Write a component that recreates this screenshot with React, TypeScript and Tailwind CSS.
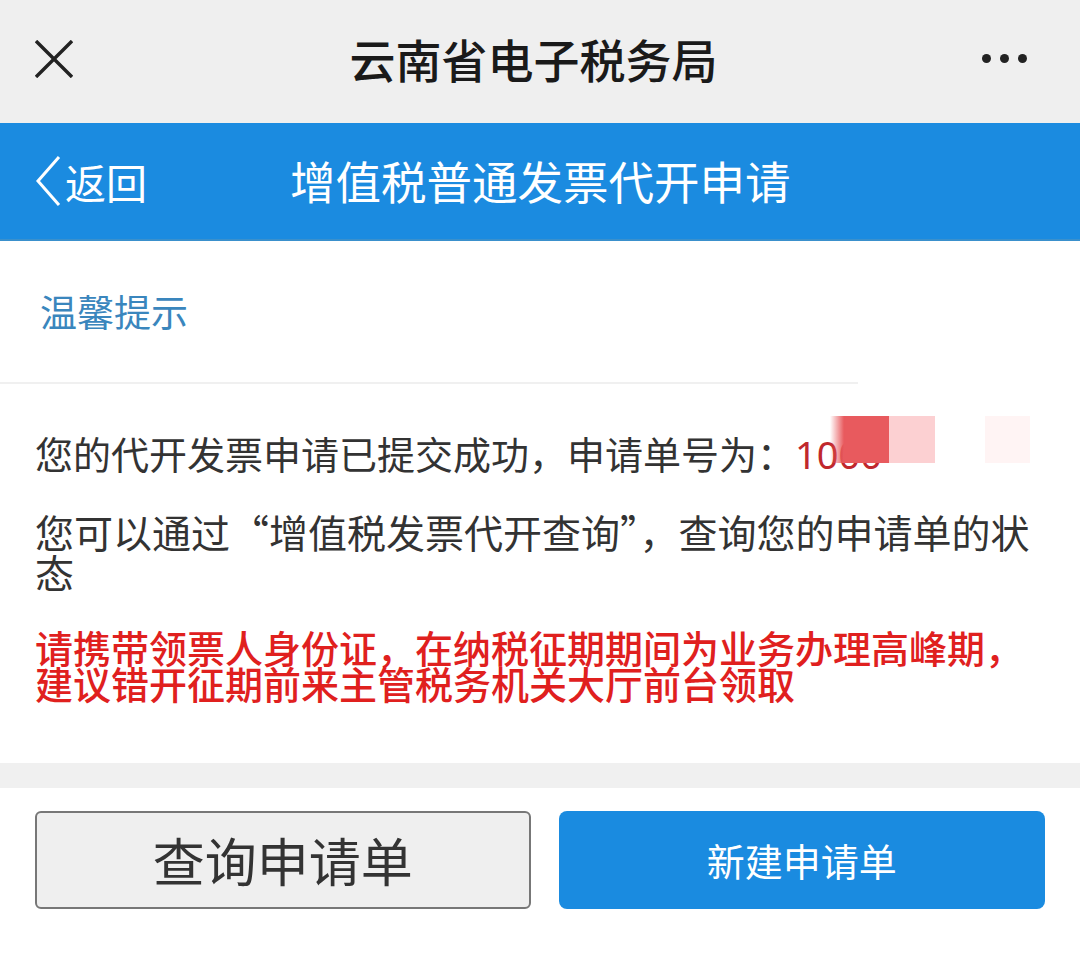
import React from "react";

const font = "font-['Noto_Sans_CJK_SC','Noto_Sans',sans-serif]";

export default function App() {
  return (
    <div className={`w-[1080px] h-[967px] bg-white overflow-hidden ${font}`}>
      {/* top bar */}
      <header className="h-[123px] bg-[#efefef] flex items-center px-[35px]">
        <svg width="38" height="38" viewBox="0 0 38 38" className="shrink-0 -mt-[6px]">
          <path d="M1 1 L37 37 M37 1 L1 37" stroke="#222" strokeWidth="3.4" fill="none" />
        </svg>
        <div className="flex-1 text-center text-[46px] leading-none text-[#1a1a1a] font-medium -mt-[8px] pl-[12px]">
          云南省电子税务局
        </div>
        <div className="flex gap-[9px] items-center pr-[18px] -mt-[6px] shrink-0">
          <span className="w-[9px] h-[9px] rounded-full bg-[#222]" />
          <span className="w-[9px] h-[9px] rounded-full bg-[#222]" />
          <span className="w-[9px] h-[9px] rounded-full bg-[#222]" />
        </div>
      </header>

      {/* blue bar */}
      <div className="h-[118px] bg-[#1b8be0] border-b-2 border-[#3a90cc] flex items-center text-white">
        <div className="w-[250px] flex items-center pl-[35px] gap-[4px]">
          <svg width="26" height="52" viewBox="0 0 26 52" className="shrink-0">
            <path d="M24 2 L3 26 L24 50" stroke="white" strokeWidth="3" fill="none" />
          </svg>
          <span className="text-[41px] leading-none">返回</span>
        </div>
        <div className="flex-1 text-[45.5px] leading-none pl-[40px]">增值税普通发票代开申请</div>
      </div>

      {/* tips header */}
      <div className="h-[141px] flex items-center px-[40px]">
        <span className="text-[37px] leading-none text-[#3a86bd]">温馨提示</span>
      </div>
      <div className="w-[858px] h-[2px] bg-[#f0f0f0]" />

      {/* content */}
      <div className="px-[35px] pt-[49px] text-[#333]">
        <div className="relative text-[38px] leading-[40px] whitespace-nowrap">
          您的代开发票申请已提交成功，申请单号为：<span className="text-[#c0282d] font-['Noto_Sans',sans-serif]">1000</span>
          <span className="absolute left-[795px] top-[-17px] w-[14px] h-[47px] bg-gradient-to-r from-transparent to-[#e85a5e]" />
          <span className="absolute left-[809px] top-[-17px] w-[45px] h-[47px] bg-[#e85a5e]" />
          <span className="absolute left-[854px] top-[-17px] w-[46px] h-[47px] bg-[#fcd0d2]" />
          <span className="absolute left-[950px] top-[-17px] w-[45px] h-[47px] bg-[#fff4f4]" />
        </div>
        <div className="mt-[37px] text-[39px] leading-[40px] [font-feature-settings:'fwid']">
          您可以通过“增值税发票代开查询”，查询您的申请单的状态
        </div>
        <div className="mt-[38px] text-[38px] leading-[36px] text-[#e0201e] font-medium">
          请携带领票人身份证，在纳税征期期间为业务办理高峰期，建议错开征期前来主管税务机关大厅前台领取
        </div>
      </div>

      {/* gray band */}
      <div className="mt-[62px] h-[25px] bg-[#f0f0f0]" />

      {/* buttons */}
      <div className="px-[35px] pt-[23px] flex gap-[28px]">
        <button className="w-[496px] h-[98px] bg-[#efefef] border-2 border-[#777] rounded-[6px] text-[52px] text-[#333] leading-none flex items-center justify-center">
          查询申请单
        </button>
        <button className="w-[487px] h-[98px] bg-[#1a8be0] rounded-[8px] text-[38px] text-white leading-none flex items-center justify-center">
          新建申请单
        </button>
      </div>
    </div>
  );
}
